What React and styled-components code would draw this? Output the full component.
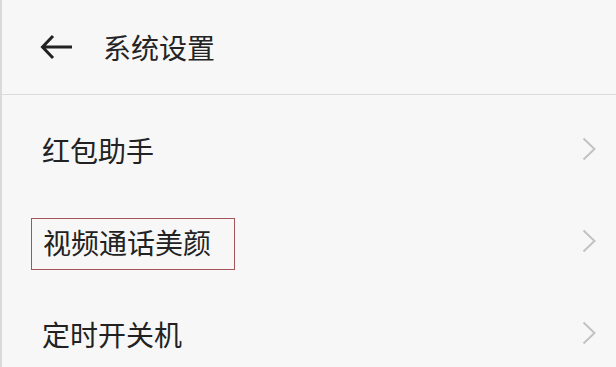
import React from 'react';
import styled, { createGlobalStyle } from 'styled-components';

const GlobalStyle = createGlobalStyle`
  html, body {
    margin: 0;
    padding: 0;
    background: #f7f7f7;
  }
  body {
    font-family: 'Noto Sans CJK SC', 'Noto Sans', sans-serif;
  }
`;

const Page = styled.div`
  width: 616px;
  height: 367px;
  box-sizing: border-box;
  background: #f7f7f7;
  border-left: 2px solid #dadada;
  overflow: hidden;
`;

const Header = styled.div`
  height: 95px;
  display: flex;
  align-items: center;
  padding-left: 38px;
  border-bottom: 1px solid #dcdcdc;
  box-sizing: border-box;
  padding-bottom: 1px;
`;

const BackButton = styled.button`
  border: 0;
  background: none;
  padding: 0;
  width: 33px;
  height: 26px;
  display: flex;
  margin-right: 30px;
  color: #222;
  cursor: pointer;
`;

const Title = styled.h1`
  margin: 0;
  font-size: 28px;
  font-weight: 400;
  line-height: 1;
  color: #242424;
`;

const List = styled.div`
  padding-top: 9px;
`;

const Row = styled.div`
  height: 92px;
  display: flex;
  align-items: center;
  justify-content: space-between;
  padding: 0 20px 0 40px;
`;

const Label = styled.span`
  font-size: 28px;
  line-height: 28px;
  color: #222;
  ${(p) =>
    p.$marked &&
    `
    border: 1.5px solid #a4525c;
    padding: 9px 23px 13px 11px;
    margin: -9px -23px -13px -11px;
  `}
`;

const Chevron = styled.svg`
  width: 14px;
  height: 24px;
  margin-top: -3px;
  color: #c2c2c2;
`;

const items = [
  { name: '红包助手' },
  { name: '视频通话美颜', marked: true },
  { name: '定时开关机' },
];

const App = () => {
  return (
    <Page>
      <GlobalStyle />
      <Header>
        <BackButton aria-label="返回">
          <svg width="33" height="26" viewBox="0 0 33 26" fill="none">
            <path
              d="M32 13H3M13 2L2.5 13L13 24"
              stroke="currentColor"
              strokeWidth="3"
              strokeLinecap="butt"
              strokeLinejoin="miter"
            />
          </svg>
        </BackButton>
        <Title>系统设置</Title>
      </Header>
      <List>
        {items.map((item) => (
          <Row key={item.name}>
            <Label $marked={item.marked}>{item.name}</Label>
            <Chevron viewBox="0 0 14 24" fill="none">
              <path
                d="M1.5 1.5L12.5 12L1.5 22.5"
                stroke="currentColor"
                strokeWidth="2"
              />
            </Chevron>
          </Row>
        ))}
      </List>
    </Page>
  );
};

export default App;
